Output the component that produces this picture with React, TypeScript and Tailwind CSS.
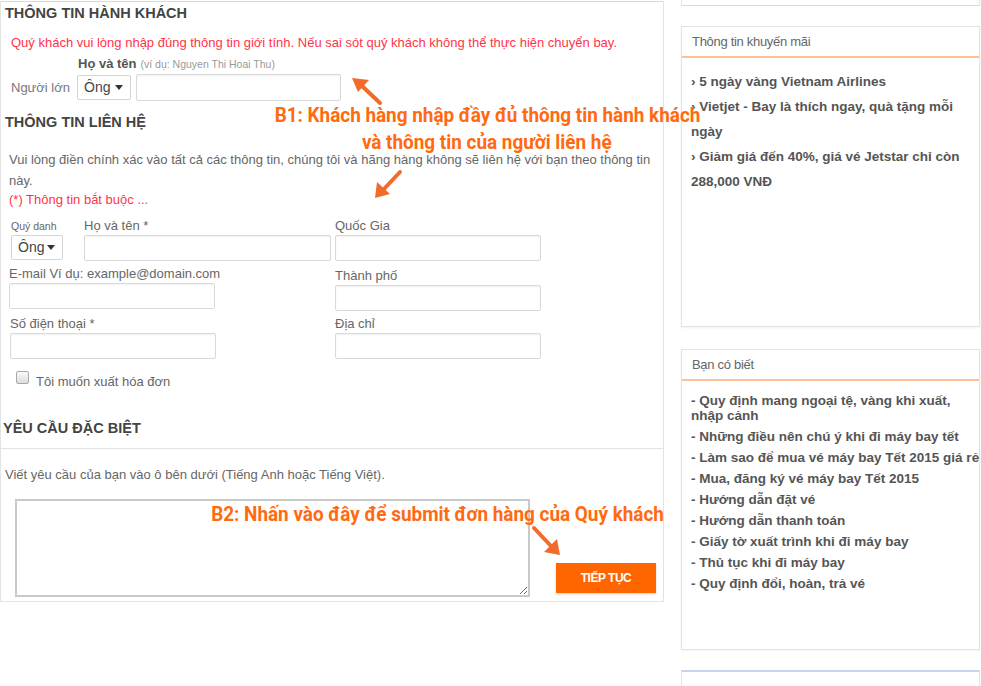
import React from "react";

const promos = [
  ["› 5 ngày vàng Vietnam Airlines"],
  ["› Vietjet - Bay là thích ngay, quà tặng mỗi", "ngày"],
  ["› Giảm giá đến 40%, giá vé Jetstar chỉ còn", "288,000 VNĐ"],
];

const tips = [
  ["- Quy định mang ngoại tệ, vàng khi xuất,", "nhập cảnh"],
  ["- Những điều nên chú ý khi đi máy bay tết"],
  ["- Làm sao để mua vé máy bay Tết 2015 giá rẻ"],
  ["- Mua, đăng ký vé máy bay Tết 2015"],
  ["- Hướng dẫn đặt vé"],
  ["- Hướng dẫn thanh toán"],
  ["- Giấy tờ xuất trình khi đi máy bay"],
  ["- Thủ tục khi đi máy bay"],
  ["- Quy định đổi, hoàn, trả vé"],
];

function Field({ w, h = 26 }: { w: string; h?: number }) {
  return (
    <input
      className={`${w} ${h === 27 ? "h-[27px]" : "h-[26px]"} border border-[#d9d9d9] rounded-[2px] bg-white shadow-[inset_0_1px_2px_rgba(0,0,0,0.06)] outline-none`}
    />
  );
}

function TitleSelect({ w }: { w: string }) {
  return (
    <div
      className={`${w} h-[25px] border border-[#d4d4d4] rounded-[2px] bg-white flex items-center justify-between pl-[6px] pr-[7px] text-[14px] text-[#444]`}
    >
      <span>Ông</span>
      <svg width="8" height="5" viewBox="0 0 8 5">
        <path d="M0 0h8L4 5z" fill="#333" />
      </svg>
    </div>
  );
}

function SideBox({ title, children }: { title: string; children: React.ReactNode }) {
  return (
    <div className="h-[301px] border border-[#e3e3e3] bg-white shadow-[0_1px_2px_rgba(0,0,0,0.05)]">
      <div className="h-[31px] border-b-2 border-[#ffbf99] pl-[10px] flex items-center text-[13px] text-[#666] tracking-[-0.3px]">
        {title}
      </div>
      {children}
    </div>
  );
}

export default function App() {
  return (
    <div
      className="relative w-[981px] h-[686px] overflow-hidden bg-white flex items-start text-[#555]"
      style={{ fontFamily: '"Liberation Sans", Arial, sans-serif' }}
    >
      {/* main form */}
      <div className="w-[664px] shrink-0 pt-[1px]">
        <div className="border border-[#e3e3e3] border-t-[#cfdbeb]">
          <div className="h-[22px] leading-[22px] pl-[4px] text-[14.5px] font-bold text-[#444]">
            THÔNG TIN HÀNH KHÁCH
          </div>
          <div className="mt-[11px] h-[16px] leading-[16px] pl-[10px] text-[13px] text-[#ff3448]">
            Quý khách vui lòng nhập đúng thông tin giới tính. Nếu sai sót quý khách không thể thực hiện chuyển bay.
          </div>
          <div className="mt-[6px] h-[14px] leading-[14px] pl-[77px] flex items-end gap-[4px]">
            <span className="text-[13px] font-bold text-[#555]">Họ và tên</span>
            <span className="text-[10.5px] text-[#999]">(ví dụ: Nguyen Thi Hoai Thu)</span>
          </div>
          <div className="mt-[3px] h-[27px] flex items-center">
            <span className="w-[76px] pl-[10px] text-[13px] text-[#777]">Người lớn</span>
            <TitleSelect w="w-[54px]" />
            <div className="ml-[5px]">
              <Field w="w-[205px]" h={27} />
            </div>
          </div>

          <div className="mt-[10px] h-[22px] leading-[22px] pl-[4px] text-[14.5px] font-bold text-[#444]">
            THÔNG TIN LIÊN HỆ
          </div>
          <div className="mt-[16px] pl-[8px] leading-[21px] text-[13px] text-[#666]">
            Vui lòng điền chính xác vào tất cả các thông tin, chúng tôi và hãng hàng không sẽ liên hệ với bạn theo thông tin
            <br />
            này.
          </div>
          <div className="h-[18px] leading-[18px] pl-[8px] text-[13px] text-[#ff3448]">
            (*) Thông tin bắt buộc ...
          </div>

          <div className="pl-[8px] grid grid-cols-[326px_206px] text-[13px] text-[#666]">
            <div className="flex flex-col">
              <div className="mt-[8px] flex gap-[21px] pl-[2px]">
                <div>
                  <div className="h-[18px] leading-[18px] text-[10.5px]">Quý danh</div>
                  <TitleSelect w="w-[52px]" />
                </div>
                <div>
                  <div className="h-[18px] leading-[18px]">Họ và tên *</div>
                  <Field w="w-[247px]" />
                </div>
              </div>
              <div className="mt-[4px]">
                <div className="h-[18px] leading-[18px]">E-mail Ví dụ: example@domain.com</div>
                <Field w="w-[206px]" />
              </div>
              <div className="mt-[6px] pl-[1px]">
                <div className="h-[18px] leading-[18px]">Số điện thoại *</div>
                <Field w="w-[206px]" />
              </div>
            </div>
            <div className="flex flex-col">
              <div className="mt-[8px]">
                <div className="h-[18px] leading-[18px]">Quốc Gia</div>
                <Field w="w-[206px]" />
              </div>
              <div className="mt-[6px]">
                <div className="h-[18px] leading-[18px]">Thành phố</div>
                <Field w="w-[206px]" />
              </div>
              <div className="mt-[4px]">
                <div className="h-[18px] leading-[18px]">Địa chỉ</div>
                <Field w="w-[206px]" />
              </div>
            </div>
          </div>

          <div className="mt-[12px] pl-[15px] flex items-start gap-[7px]">
            <div className="w-[13px] h-[13px] border border-[#a9a9a9] rounded-[2px] bg-gradient-to-b from-[#fafafa] to-[#dcdcdc]" />
            <span className="mt-[4px] leading-[14px] text-[13px] text-[#666]">Tôi muốn xuất hóa đơn</span>
          </div>

          <div className="mt-[28px] h-[22px] leading-[22px] pl-[2px] text-[14.5px] font-bold text-[#444]">
            YÊU CẦU ĐẶC BIỆT
          </div>
          <div className="mt-[9px] border-t border-[#e3e3e3]" />
          <div className="mt-[18px] h-[16px] leading-[16px] pl-[4px] text-[13px] text-[#666]">
            Viết yêu cầu của bạn vào ô bên dưới (Tiếng Anh hoặc Tiếng Việt).
          </div>
          <div className="mt-[16px] pb-[4px] pl-[14px] flex items-end">
            <textarea className="w-[515px] h-[98px] border-2 border-[#c9c9c9] bg-white outline-none" />
            <button className="ml-[26px] mb-[4px] w-[100px] h-[30px] bg-[#ff6600] text-white text-[12px] font-bold tracking-[-0.5px] shadow-[0_1px_2px_rgba(0,0,0,0.2)]">
              TIẾP TỤC
            </button>
          </div>
        </div>
      </div>

      {/* sidebar */}
      <div className="ml-[17px] w-[299px] shrink-0">
        <div className="h-[6px] border border-t-0 border-[#e3e3e3] border-b-[#cfdbeb]" />
        <div className="mt-[20px]">
          <SideBox title="Thông tin khuyến mãi">
            <div className="pt-[11px] pl-[9px] text-[13.5px] font-bold text-[#555] leading-[25px] whitespace-nowrap">
              {promos.map((p, i) => (
                <div key={i}>
                  {p.map((l, j) => (
                    <div key={j}>{l}</div>
                  ))}
                </div>
              ))}
            </div>
          </SideBox>
        </div>
        <div className="mt-[22px]">
          <SideBox title="Bạn có biết">
            <div className="pt-[12px] pl-[9px] text-[13.5px] font-bold text-[#555] leading-[15px] whitespace-nowrap">
              {tips.map((p, i) => (
                <div key={i} className="mb-[6px]">
                  {p.map((l, j) => (
                    <div key={j}>{l}</div>
                  ))}
                </div>
              ))}
            </div>
          </SideBox>
        </div>
        <div className="mt-[20px] h-[40px] border border-[#e3e3e3] border-t-2 border-t-[#c7d5ea] pt-[12px] pl-[64px] text-[15px] font-bold text-[#5b7db1]">
          Vé máy bay giá rẻ
        </div>
      </div>

      {/* annotations */}
      <svg className="absolute inset-0 pointer-events-none" width="981" height="686" viewBox="0 0 981 686">
        <g stroke="#f26b2a" strokeWidth="4" strokeLinecap="round" fill="#f26b2a">
          <line x1="380" y1="103" x2="362" y2="86" />
          <line x1="400" y1="172" x2="383" y2="190" />
          <line x1="534" y1="528" x2="551" y2="546" />
        </g>
        <g fill="#f26b2a">
          <polygon points="352,78 369,80 358,92" />
          <polygon points="375,198 377,182 390,194" />
          <polygon points="560,555 544,552 557,539" />
        </g>
      </svg>
      <div
        className="absolute left-[274px] top-[102px] w-[426px] flex flex-col items-center text-[#ff6a10] font-bold text-[21px] leading-[27px] pointer-events-none"
        style={{ fontFamily: 'Roboto, "Liberation Sans", sans-serif' }}
      >
        <div className="w-max whitespace-nowrap origin-center scale-x-[0.9]">B1: Khách hàng nhập đầy đủ thông tin hành khách</div>
        <div className="w-max whitespace-nowrap origin-center scale-x-[0.9]">và thông tin của người liên hệ</div>
      </div>
      <div
        className="absolute left-[212px] top-[501px] w-[452px] flex flex-col items-center text-[#ff6a10] font-bold text-[21px] leading-[27px] pointer-events-none"
        style={{ fontFamily: 'Roboto, "Liberation Sans", sans-serif' }}
      >
        <div className="w-max whitespace-nowrap origin-center scale-x-[0.9]">B2: Nhấn vào đây để submit đơn hàng của Quý khách</div>
      </div>
    </div>
  );
}
